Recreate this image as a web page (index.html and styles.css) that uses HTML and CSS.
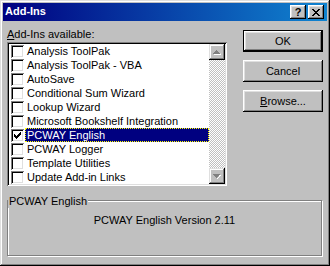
FILE: index.html
```html
<!DOCTYPE html>
<html lang="en">
<head>
    <meta charset="UTF-8">
    <title>Add-Ins</title>
    <link rel="stylesheet" href="styles.css">
</head>
<body>
    <div class="dialog">
        <div class="titlebar">
            <span class="title">Add-Ins</span>
            <div class="cap-btns">
                <div class="cap-btn help">?</div>
                <div class="cap-btn">
                    <svg width="8" height="7" viewBox="0 0 8 7"><path d="M0 0h2v1h-2zM6 0h2v1h-2zM1 1h2v1h-2zM5 1h2v1h-2zM2 2h4v1h-4zM3 3h2v1h-2zM2 4h4v1h-4zM1 5h2v1h-2zM5 5h2v1h-2zM0 6h2v1h-2zM6 6h2v1h-2z" fill="#000"/></svg>
                </div>
            </div>
        </div>

        <div class="content">
            <div class="main">
                <div class="list-col">
                    <label class="list-label"><u>A</u>dd-Ins available:</label>
                    <div class="listbox">
                        <ul class="items">
                            <li class="item"><span class="check"></span><span class="name">Analysis ToolPak</span></li>
                            <li class="item"><span class="check"></span><span class="name">Analysis ToolPak - VBA</span></li>
                            <li class="item"><span class="check"></span><span class="name">AutoSave</span></li>
                            <li class="item"><span class="check"></span><span class="name">Conditional Sum Wizard</span></li>
                            <li class="item"><span class="check"></span><span class="name">Lookup Wizard</span></li>
                            <li class="item"><span class="check"></span><span class="name">Microsoft Bookshelf Integration</span></li>
                            <li class="item selected">
                                <span class="check">
                                    <svg width="7" height="7" viewBox="0 0 7 7"><path d="M6 0h1v3h-1zM5 1h1v3h-1zM4 2h1v3h-1zM3 3h1v3h-1zM2 4h1v3h-1zM1 3h1v3h-1zM0 2h1v3h-1z" fill="#000"/></svg>
                                </span>
                                <span class="name">PCWAY English</span>
                            </li>
                            <li class="item"><span class="check"></span><span class="name">PCWAY Logger</span></li>
                            <li class="item"><span class="check"></span><span class="name">Template Utilities</span></li>
                            <li class="item"><span class="check"></span><span class="name">Update Add-in Links</span></li>
                        </ul>
                        <div class="scrollbar">
                            <div class="sb-btn">
                                <svg width="8" height="5" viewBox="0 0 8 5"><path d="M4 1h1v1h1v1h1v1h1v1h-7v-1h7" fill="#fff"/><path d="M3 0h1v1h1v1h1v1h1v1h-7v-1h1v-1h1v-1h1z" fill="#808080"/></svg>
                            </div>
                            <div class="sb-track"></div>
                            <div class="sb-btn">
                                <svg width="8" height="5" viewBox="0 0 8 5"><path d="M1 1h7v1h-1v1h-1v1h-1v1h-1v-1h1v-1h1v-1h1z" fill="#fff"/><path d="M0 0h7v1h-1v1h-1v1h-1v1h-1v-1h-1v-1h-1v-1h-1z" fill="#808080"/></svg>
                            </div>
                        </div>
                    </div>
                </div>

                <div class="btn-col">
                    <button class="btn default">OK</button>
                    <button class="btn">Cancel</button>
                    <button class="btn"><u>B</u>rowse...</button>
                </div>
            </div>

            <div class="group">
                <div class="group-title">PCWAY English</div>
                <p class="group-text">PCWAY English Version 2.11</p>
            </div>
        </div>
    </div>
</body>
</html>
```

FILE: styles.css
```css
body {
    margin: 0;
    font-family: "Liberation Sans", Arial, sans-serif;
    font-size: 11px;
    color: #000;
    background-color: #c0c0c0;
}

.dialog {
    width: 330px;
    height: 266px;
    box-sizing: border-box;
    padding: 3px;
    display: flex;
    flex-direction: column;
    background-color: #c0c0c0;
    box-shadow: inset -1px -1px #000, inset 1px 1px #dfdfdf,
                inset -2px -2px #808080, inset 2px 2px #fff;
}

/* title bar */
.titlebar {
    height: 18px;
    display: flex;
    align-items: center;
    padding: 0 3px 0 2px;
    background: linear-gradient(to right, #000080, #1084d0);
    color: #fff;
}

.title {
    flex: 1;
    font-weight: bold;
    line-height: 13px;
    padding-bottom: 1px;
}

.cap-btns {
    display: flex;
    gap: 2px;
}

.cap-btn {
    width: 16px;
    height: 14px;
    display: flex;
    align-items: center;
    justify-content: center;
    background-color: #c0c0c0;
    color: #000;
    box-shadow: inset -1px -1px #000, inset 1px 1px #fff,
                inset -2px -2px #808080, inset 2px 2px #dfdfdf;
}

.cap-btn.help {
    font-weight: bold;
    font-size: 11px;
    line-height: 14px;
}

/* main area */
.content {
    flex: 1;
    display: flex;
    flex-direction: column;
    padding: 7px 4px 0 4px;
}

.main {
    display: flex;
    justify-content: space-between;
}

.list-col {
    width: 220px;
}

.list-label {
    display: block;
    height: 14px;
    line-height: 13px;
}

.listbox {
    height: 144px;
    box-sizing: border-box;
    padding: 2px;
    display: flex;
    background-color: #fff;
    box-shadow: inset 1px 1px #808080, inset -1px -1px #fff,
                inset 2px 2px #000, inset -2px -2px #dfdfdf;
}

.items {
    flex: 1;
    list-style: none;
    margin: 0;
    padding: 0;
}

.item {
    display: flex;
    align-items: center;
    height: 14px;
}

.check {
    width: 13px;
    height: 13px;
    box-sizing: border-box;
    margin: 0 1px 0 2px;
    display: flex;
    align-items: center;
    justify-content: center;
    background-color: #fff;
    box-shadow: inset 1px 1px #808080, inset -1px -1px #fff,
                inset 2px 2px #000, inset -2px -2px #dfdfdf;
}

.name {
    flex: 1;
    height: 14px;
    box-sizing: border-box;
    padding: 0 1px;
    line-height: 12px;
    border: 1px dotted transparent;
    white-space: nowrap;
}

.selected .name {
    background-color: #000080;
    color: #fff;
    border-color: #ffff00;
}

.scrollbar {
    width: 16px;
    display: flex;
    flex-direction: column;
}

.sb-btn {
    height: 16px;
    display: flex;
    align-items: center;
    justify-content: center;
    background-color: #c0c0c0;
    box-shadow: inset -1px -1px #000, inset 1px 1px #dfdfdf,
                inset -2px -2px #808080, inset 2px 2px #fff;
}

.sb-track {
    flex: 1;
    background: repeating-conic-gradient(#fff 0 25%, #c0c0c0 0 50%) 0 0 / 2px 2px;
}

/* buttons */
.btn-col {
    width: 80px;
    display: flex;
    flex-direction: column;
    gap: 8px;
    padding-top: 2px;
}

.btn {
    height: 22px;
    padding: 0;
    border: none;
    font: inherit;
    color: #000;
    background-color: #c0c0c0;
    box-shadow: inset -1px -1px #000, inset 1px 1px #fff,
                inset -2px -2px #808080, inset 2px 2px #dfdfdf;
}

.btn.default {
    border: 1px solid #000;
}

/* group box */
.group {
    width: 315px;
    height: 56px;
    box-sizing: border-box;
    margin-top: 14px;
    border: 1px solid #808080;
    box-shadow: 1px 1px 0 #fff, inset 1px 1px 0 #fff;
}

.group-title {
    width: max-content;
    margin-top: -6px;
    padding: 0 1px;
    line-height: 13px;
    background-color: #c0c0c0;
}

.group-text {
    margin: 6px 0 0;
    line-height: 13px;
    text-align: center;
}
```
